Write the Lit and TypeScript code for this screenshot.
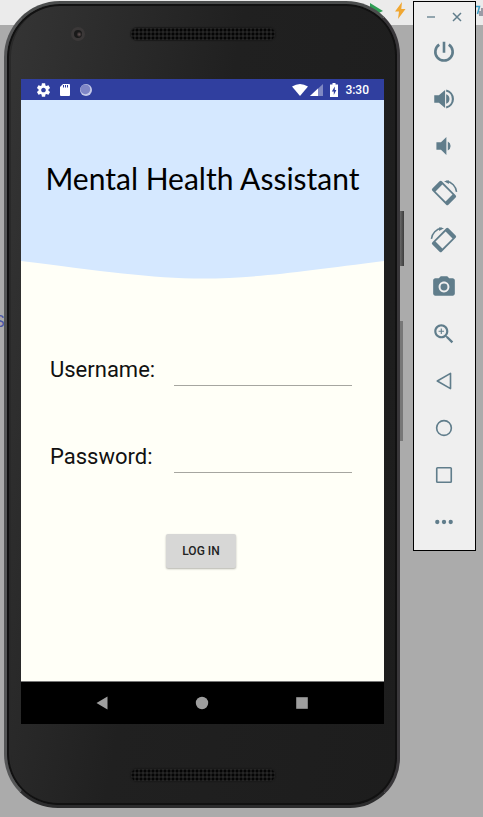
import { LitElement, html, css, svg } from "lit";
import { customElement } from "lit/decorators.js";

const tools = [
  { name: "Power", icon: svg`<path fill="none" stroke="currentColor" stroke-width="2.4" d="M7.6 5.2a8 8 0 1 0 8.8 0M12 2.6v10"/>` },
  { name: "Volume up", icon: svg`<path fill="currentColor" d="M3 8.6v6.8h4.3l5.7 5V3.600l-5.700 5zM14 7.600a4.700 4.700 0 0 1 0 8.800z"/><path fill="none" stroke="currentColor" stroke-width="2" d="M14 4.200a8 8 0 0 1 0 15.600"/>` },
  { name: "Volume down", icon: svg`<path fill="currentColor" d="M5 8.600v6.800h4.200l5 5V3.600l-5 5zM15.500 7.800a4.700 4.700 0 0 1 0 8.400z"/>` },
  { name: "Rotate left", icon: svg`<g transform="rotate(45 12 12)"><path fill="currentColor" fill-rule="evenodd" d="M3 5.800h18a1.500 1.500 0 0 1 1.500 1.500v9.400a1.500 1.500 0 0 1-1.500 1.500H3a1.500 1.500 0 0 1-1.500-1.500V7.300A1.500 1.500 0 0 1 3 5.800zM5.400 7.500v9h13.200v-9z"/></g><path fill="none" stroke="currentColor" stroke-width="1.400" d="M14 1.200c5 .4 9.200 4.600 9.600 9.800"/><path fill="currentColor" d="M12 1.200l4.500-1v3.400z"/>` },
  { name: "Rotate right", icon: svg`<g transform="rotate(-45 12 12)"><path fill="currentColor" fill-rule="evenodd" d="M3 5.800h18a1.500 1.500 0 0 1 1.500 1.500v9.400a1.500 1.500 0 0 1-1.500 1.500H3a1.500 1.500 0 0 1-1.500-1.500V7.300A1.500 1.500 0 0 1 3 5.800zM5.400 7.500v9h13.200v-9z"/></g><path fill="none" stroke="currentColor" stroke-width="1.400" d="M10 1.200C5 1.600.8 5.800.4 11"/><path fill="currentColor" d="M12 1.200l-4.500-1v3.400z"/>` },
  { name: "Take screenshot", icon: svg`<circle cx="12" cy="12" r="3.200" fill="currentColor"/><path fill="currentColor" d="M9 2L7.170 4H4c-1.100 0-2 .9-2 2v12c0 1.100.9 2 2 2h16c1.100 0 2-.9 2-2V6c0-1.100-.9-2-2-2h-3.170L15 2H9zm3 15c-2.760 0-5-2.240-5-5s2.240-5 5-5 5 2.240 5 5-2.240 5-5 5z"/>` },
  { name: "Zoom", icon: svg`<path fill="currentColor" d="M15.500 14h-.79l-.28-.27C15.410 12.590 16 11.110 16 9.500 16 5.910 13.090 3 9.500 3S3 5.910 3 9.500 5.910 16 9.500 16c1.610 0 3.090-.59 4.230-1.570l.27.28v.79l5 4.990L20.490 19l-4.990-5zm-6 0C7.010 14 5 11.990 5 9.500S7.010 5 9.500 5 14 7.010 14 9.500 11.990 14 9.500 14zm2.500-4h-2v2H9v-2H7V9h2V7h1v2h2v1z"/>` },
  { name: "Back", icon: svg`<path fill="none" stroke="currentColor" stroke-width="1.500" stroke-linejoin="round" d="M18 5v14L5.800 12z"/>` },
  { name: "Home", icon: svg`<circle cx="12" cy="12" r="6.800" fill="none" stroke="currentColor" stroke-width="1.500"/>` },
  { name: "Overview", icon: svg`<rect x="5.300" y="5.300" width="13.400" height="13.400" rx=".8" fill="none" stroke="currentColor" stroke-width="1.500"/>` },
  { name: "More", icon: svg`<g fill="currentColor"><circle cx="5.800" cy="12" r="2"/><circle cx="12" cy="12" r="2"/><circle cx="18.200" cy="12" r="2"/></g>` },
];

@customElement("emulator-toolbar")
export class EmulatorToolbar extends LitElement {
  static styles = css`
    :host {
      display: block;
      box-sizing: border-box;
      border: 1px solid #000;
      background: #efefef;
      color: #607d8b;
      padding: 3px 1px 5px 0;
    }
    button {
      display: flex;
      align-items: center;
      justify-content: center;
      border: 0;
      padding: 0;
      background: none;
      color: inherit;
      cursor: pointer;
    }
    .window {
      display: flex;
      justify-content: center;
      gap: 6px;
      height: 23px;
    }
    .window button {
      width: 20px;
    }
    .window svg {
      width: 10px;
      height: 10px;
    }
    .tool {
      width: 100%;
      height: 47px;
    }
    .tool svg {
      width: 26px;
      height: 26px;
      overflow: visible;
    }
  `;

  render() {
    return html`
      <div class="window">
        <button aria-label="Minimize"><svg viewBox="0 0 10 10"><path d="M1 5h8" stroke="currentColor" stroke-width="1.300"/></svg></button>
        <button aria-label="Close"><svg viewBox="0 0 10 10"><path d="M1 1l8 8M9 1l-8 8" stroke="currentColor" stroke-width="1.500"/></svg></button>
      </div>
      ${tools.map((t) => html`<button class="tool" aria-label=${t.name}><svg viewBox="0 0 24 24">${t.icon}</svg></button>`)}
    `;
  }
}

@customElement("login-screen")
export class LoginScreen extends LitElement {
  static styles = css`
    :host {
      display: flex;
      flex-direction: column;
      background: #fffff7;
      color: #111;
      font-family: Roboto, sans-serif;
    }
    .status {
      display: flex;
      align-items: center;
      height: 21px;
      padding: 0 15px;
      background: #303f9f;
      color: #fff;
      font-size: 12px;
      font-weight: 500;
    }
    .status svg {
      height: 14px;
      flex: none;
    }
    .left {
      display: flex;
      gap: 7px;
      flex: 1;
    }
    .right {
      display: flex;
      align-items: center;
      gap: 2px;
    }
    .battery {
      margin: 0 4px;
    }
    .hero {
      height: 161px;
      background: #d5e8ff;
      text-align: center;
    }
    h1 {
      margin: 0;
      padding-top: 58px;
      font: 400 30px/40px Lato, sans-serif;
      color: #000;
      white-space: nowrap;
    }
    .curve {
      display: block;
      width: 100%;
      height: 18px;
    }
    form {
      flex: 1;
      padding: 67px 32px 24px 29px;
    }
    .row {
      display: grid;
      grid-template-columns: 124px 1fr;
      grid-template-rows: 40px;
      margin-bottom: 47px;
    }
    label {
      font-size: 22px;
      line-height: 48px;
    }
    input {
      min-width: 0;
      border: 0;
      border-bottom: 1px solid #a6a6a0;
      padding: 0 4px;
      background: none;
      font: 18px Roboto, sans-serif;
      outline: none;
    }
    .login {
      display: block;
      height: 34px;
      margin: 61px auto 0;
      padding: 0 16px;
      border: 0;
      border-radius: 2px;
      background: #d7d7d6;
      box-shadow: 0 1px 2px rgba(0, 0, 0, 0.3);
      color: #222;
      font: 500 12px Roboto, sans-serif;
    }
    nav {
      display: flex;
      align-items: center;
      justify-content: center;
      gap: 76px;
      height: 42px;
      padding-right: 2px;
      border-top: 1px solid #777;
      background: #000;
      color: #9e9e9e;
    }
    nav button {
      display: flex;
      justify-content: center;
      width: 24px;
      padding: 0;
      border: 0;
      background: none;
      color: inherit;
    }
    nav svg {
      width: 14px;
      height: 14px;
    }
  `;

  render() {
    return html`
      <div class="status">
        <div class="left">
          <svg width="15" viewBox="1.500 1.500 21 21"><path fill="#fff" d="M19.430 12.980c.04-.32.070-.64.070-.98s-.03-.66-.07-.98l2.110-1.650c.19-.15.240-.42.120-.64l-2-3.460c-.12-.22-.39-.3-.61-.22l-2.490 1c-.52-.4-1.080-.73-1.690-.98l-.38-2.650C14.460 2.180 14.250 2 14 2h-4c-.25 0-.46.180-.49.420l-.38 2.650c-.61.250-1.170.590-1.690.980l-2.490-1c-.23-.09-.49 0-.61.220l-2 3.460c-.13.220-.07.490.120.640l2.110 1.650c-.04.320-.07.650-.07.980s.030.660.070.980l-2.110 1.650c-.19.150-.24.420-.12.640l2 3.460c.12.220.39.300.61.220l2.490-1c.52.400 1.080.730 1.690.980l.38 2.650c.03.240.240.420.490.420h4c.25 0 .46-.18.490-.42l.38-2.650c.61-.25 1.170-.59 1.690-.98l2.490 1c.23.090.490 0 .610-.22l2-3.460c.12-.22.070-.49-.12-.64l-2.110-1.650zM12 15.500c-1.930 0-3.500-1.570-3.500-3.500s1.570-3.500 3.500-3.500 3.500 1.570 3.500 3.500-1.570 3.500-3.500 3.500z"/></svg>
          <svg width="14" viewBox="0 0 14 14"><path fill="#fff" d="M5 1h6q1 0 1 1v10q0 1-1 1H3q-1 0-1-1V4z"/><path d="M5.500 2v2.500M7.500 2v2.500M9.500 2v2.500" stroke="#303f9f"/></svg>
          <svg width="14" viewBox="0 0 14 14"><circle cx="7" cy="7" r="6" fill="#c5cae9"/><circle cx="6.300" cy="6.300" r="4.900" fill="#7f86c6"/></svg>
        </div>
        <div class="right">
          <svg width="16" viewBox="0 0 16 14"><path fill="#fff" d="M8 13L0 3.500Q8-1.500 16 3.500z"/></svg>
          <svg width="13" viewBox="0 0 13 14"><path fill="#7f88c3" d="M13 1v12H0z"/><path fill="#fff" d="M8 5.500V13H0z"/></svg>
          <svg class="battery" width="10" viewBox="1 0 10 14"><path fill="#fff" d="M4.500 0h3v1.500H10V14H2V1.500h2.500z"/><path fill="#303f9f" d="M6.800 3.500L3.800 8.500h2v3.500l2.600-5H6.800z"/></svg>
          <span>3:30</span>
        </div>
      </div>
      <header class="hero"><h1>Mental Health Assistant</h1></header>
      <svg class="curve" viewBox="0 0 363 18" preserveAspectRatio="none"><path fill="#d5e8ff" d="M0 0C80 10 130 17.500 182 17.500S284 10 363 0z"/></svg>
      <form @submit=${(e: Event) => e.preventDefault()}>
        <div class="row"><label for="username">Username:</label><input id="username" type="text" /></div>
        <div class="row"><label for="password">Password:</label><input id="password" type="password" /></div>
        <button class="login">LOG IN</button>
      </form>
      <nav>
        <button aria-label="Back"><svg viewBox="0 0 14 14"><path fill="currentColor" d="M12.500 .5v13L1.500 7z"/></svg></button>
        <button aria-label="Home"><svg viewBox="0 0 14 14"><circle cx="7" cy="7" r="6.200" fill="currentColor"/></svg></button>
        <button aria-label="Recent apps"><svg viewBox="0 0 14 14"><path fill="currentColor" d="M1.200 1.200h11.600v11.600H1.200z"/></svg></button>
      </nav>
    `;
  }
}

@customElement("app-root")
export class AppRoot extends LitElement {
  static styles = css`
    :host {
      display: flex;
      align-items: flex-start;
      gap: 13px;
      position: relative;
      box-sizing: border-box;
      min-height: 100vh;
      padding: 1px 7px 9px 4px;
      overflow: hidden;
      background: linear-gradient(#ebebeb 25px, #ababab 25px);
    }
    .phone {
      display: flex;
      flex-direction: column;
      flex: 1;
      align-self: stretch;
      position: relative;
      min-width: 0;
      box-sizing: border-box;
      border: 3px solid;
      border-color: #4b4d4d #39373a #2c2c2d #555657;
      border-radius: 56px 54px 50px 54px;
      padding: 0 13px 0 14px;
      background: linear-gradient(100deg, #353535, #202020 45%, #1d1d1d);
      box-shadow: inset 0 0 0 2px #111, inset 4px 0 0 #292929;
    }
    login-screen {
      flex: 1;
    }
    .bezel {
      display: flex;
      align-items: center;
      justify-content: center;
      flex: none;
      position: relative;
    }
    .top {
      height: 75px;
    }
    .bottom {
      height: 81px;
    }
    .grille {
      width: 144px;
      height: 12px;
      border-radius: 6px;
      background: radial-gradient(circle, #050505 1px, #252525 2px) 0 0 / 4px 4px;
      box-shadow: 0 0 1px 1px #1a1a1a;
    }
    .top .grille {
      margin-bottom: 15px;
    }
    .bottom .grille {
      margin-top: 20px;
    }
    .camera {
      position: absolute;
      left: 50px;
      top: 23px;
      width: 8px;
      height: 8px;
      border: 3px solid #3b3838;
      border-radius: 50%;
      background: radial-gradient(circle at 65% 55%, #655, #191919 40%);
    }
    .key {
      position: absolute;
      left: 100%;
      margin-left: 3px;
      background: linear-gradient(90deg, #686868, #3c3c3c);
    }
    .power {
      top: 207px;
      width: 4px;
      height: 55px;
    }
    .volume {
      top: 317px;
      width: 3px;
      height: 120px;
      background: #777;
    }
    emulator-toolbar {
      flex: none;
      width: 63px;
      position: relative;
    }
    .behind {
      position: absolute;
    }
    .run {
      left: 368px;
      top: 3px;
      width: 16px;
      height: 14px;
    }
    .bolt {
      left: 394px;
      top: 2px;
      width: 12px;
      height: 17px;
    }
    .signal {
      right: 0;
      top: 5px;
      width: 8px;
      height: 11px;
    }
    .letter {
      left: -6px;
      top: 312px;
      color: #4b55a5;
      font: 16px/20px "Liberation Sans", sans-serif;
    }
  `;

  render() {
    return html`
      <svg class="behind run" viewBox="0 0 16 14"><path fill="#2f9e55" d="M2 0l13 8-13 6z"/></svg>
      <svg class="behind bolt" viewBox="0 0 12 17"><path fill="#f0a732" d="M8 0L1 9.500h4L4 17l7.500-10H7.300z"/></svg>
      <svg class="behind signal" viewBox="0 0 8 11"><path d="M0 1.500h4.500L2.500 9" fill="none" stroke="#3a9cc4" stroke-width="1.500"/><path d="M5 6v5M7 3v8" stroke="#667" stroke-width="1.200"/></svg>
      <span class="behind letter">S</span>
      <main class="phone">
        <span class="key power"></span>
        <span class="key volume"></span>
        <div class="bezel top"><span class="camera"></span><span class="grille"></span></div>
        <login-screen></login-screen>
        <div class="bezel bottom"><span class="grille"></span></div>
      </main>
      <emulator-toolbar></emulator-toolbar>
    `;
  }
}
